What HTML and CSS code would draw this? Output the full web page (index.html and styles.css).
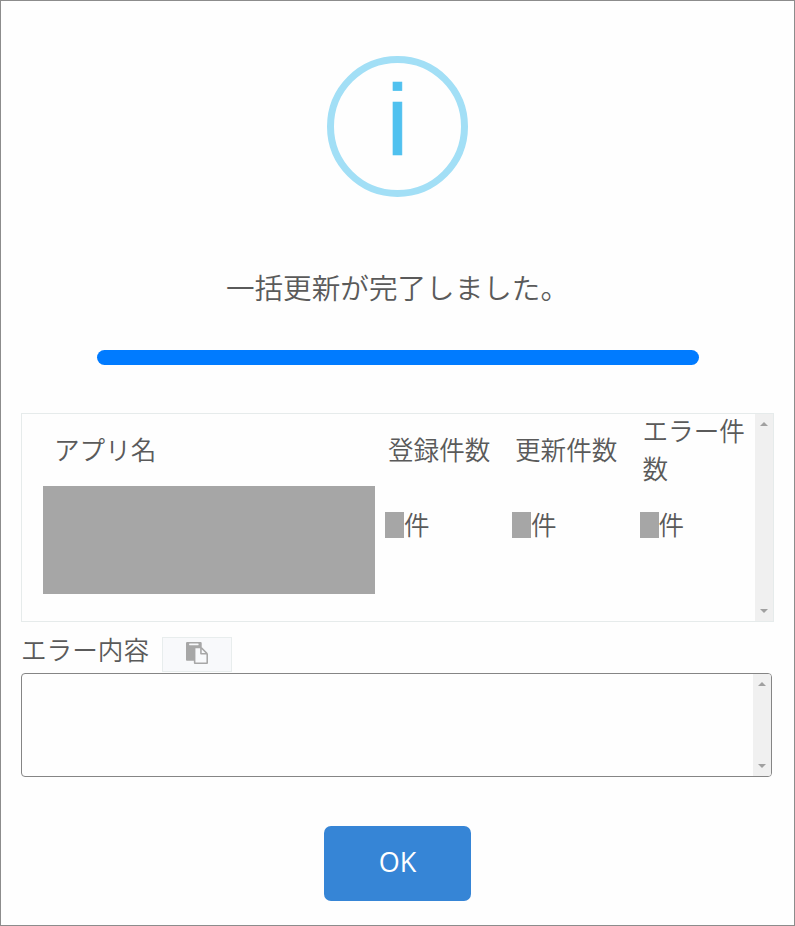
FILE: index.html
```html
<!DOCTYPE html>
<html lang="ja">
<head>
<meta charset="utf-8">
<title>一括更新</title>
<link rel="stylesheet" href="styles.css">
</head>
<body>
<main class="dialog">
  <div class="info-icon"><span class="info-mark">i</span></div>
  <h1 class="message">一括更新が完了しました。</h1>
  <div class="progress"></div>
  <section class="results">
    <div class="grid">
      <div class="head app-head">アプリ名</div>
      <div class="head">登録件数</div>
      <div class="head">更新件数</div>
      <div class="head">エラー件数</div>
      <div class="mask-app"></div>
      <div class="count"><span class="mask"></span><span class="unit">件</span></div>
      <div class="count"><span class="mask"></span><span class="unit">件</span></div>
      <div class="count"><span class="mask"></span><span class="unit">件</span></div>
    </div>
    <div class="scrollbar">
      <svg class="arrow" viewBox="0 0 8 4"><path d="M0 4L4 0L8 4Z"/></svg>
      <svg class="arrow" viewBox="0 0 8 4"><path d="M0 0L4 4L8 0Z"/></svg>
    </div>
  </section>
  <div class="error-bar">
    <span class="error-label">エラー内容</span>
    <button class="copy" type="button">
      <svg class="paste" viewBox="0 0 1792 1792"><path d="M768 1664h896v-640h-416q-40 0-68-28t-28-68v-416h-384v1152zm256-1440v-64q0-13-9.500-22.500t-22.500-9.500h-704q-13 0-22.500 9.500t-9.500 22.500v64q0 13 9.500 22.500t22.500 9.500h704q13 0 22.500-9.500t9.500-22.500zm256 672h299l-299-299v299zm512 128v672q0 40-28 68t-68 28h-960q-40 0-68-28t-28-68v-160h-544q-40 0-68-28t-28-68v-1344q0-40 28-68t68-28h1088q40 0 68 28t28 68v328q21 13 36 28l408 408q28 28 48 76t20 88z"/></svg>
    </button>
  </div>
  <div class="error-box">
    <div class="scrollbar">
      <svg class="arrow" viewBox="0 0 8 4"><path d="M0 4L4 0L8 4Z"/></svg>
      <svg class="arrow" viewBox="0 0 8 4"><path d="M0 0L4 4L8 0Z"/></svg>
    </div>
  </div>
  <button class="ok" type="button">OK</button>
</main>
</body>
</html>
```
FILE: styles.css
```css
* { box-sizing: border-box; }
body { margin: 0; }
.dialog {
  width: 795px;
  height: 926px;
  padding: 55px 21px 0;
  border: 1px solid #8c8c8c;
  background: #fefefe;
  display: flex;
  flex-direction: column;
  color: #5a5a5a;
  font: 350 25.6px/38px "Noto Sans CJK JP DemiLight", "Noto Sans CJK JP", sans-serif;
  overflow: hidden;
}
.info-icon {
  align-self: center;
  width: 141px;
  height: 141px;
  flex: none;
  border: 7px solid #a2dff6;
  border-radius: 50%;
  display: flex;
  justify-content: center;
}
.info-mark {
  font: 400 101px/114px "Liberation Sans", sans-serif;
  color: #50c1ef;
  -webkit-text-stroke: 0.6px #50c1ef;
}
.message {
  margin: 69px 0 0;
  height: 42px;
  text-align: center;
  font-size: 28.6px;
  line-height: 42px;
  font-weight: 350;
}
.progress {
  align-self: center;
  width: 602px;
  height: 15px;
  flex: none;
  margin-top: 42px;
  border-radius: 8px;
  background: #007bff;
}
.results {
  display: flex;
  justify-content: space-between;
  width: 753px;
  height: 209px;
  flex: none;
  margin-top: 48px;
  margin-left: -1px;
  border: 1px solid #e6ebeb;
}
.grid {
  display: grid;
  grid-template-columns: 342px 127px 127.5px 115px;
  grid-template-rows: 72px 108px;
  margin-left: 21px;
}
.head {
  align-self: center;
  padding: 0 0 3px 3px;
}
.app-head { padding-left: 11px; }
.mask-app {
  width: 332px;
  background: #a6a6a6;
}
.count {
  display: flex;
  align-items: center;
  height: 38px;
  margin-top: 20px;
}
.unit { padding-bottom: 3px; }
.mask {
  width: 19px;
  height: 26px;
  background: #a6a6a6;
}
.scrollbar {
  width: 18px;
  background: #f0f0f0;
  display: flex;
  flex-direction: column;
  align-items: center;
  justify-content: space-between;
  padding: 8px 0;
}
.arrow {
  width: 8px;
  height: 4px;
  fill: #a0a0a0;
}
.error-bar {
  display: flex;
  height: 51px;
  flex: none;
  padding-top: 8px;
}
.error-label { line-height: 38px; margin-left: -1px; }
.copy {
  width: 70px;
  height: 35px;
  margin: 7px 0 0 13px;
  padding: 0;
  border: 1px solid #e8eded;
  background: #f8f9fb;
  display: flex;
  align-items: flex-start;
  justify-content: center;
}
.paste {
  width: 22px;
  height: 22px;
  margin-top: 4px;
  fill: #a7a7a7;
}
.error-box {
  display: flex;
  justify-content: flex-end;
  width: 751px;
  height: 104px;
  flex: none;
  margin-left: -1px;
  border: 1px solid #858585;
  border-radius: 4px;
  overflow: hidden;
}
.ok {
  align-self: center;
  width: 147px;
  height: 75px;
  flex: none;
  margin-top: 49px;
  padding: 0 0 4px;
  border: 0;
  border-radius: 7px;
  background: #3685d6;
  color: #fff;
  font: 400 27px/40px "Open Sans", sans-serif;
}
```
